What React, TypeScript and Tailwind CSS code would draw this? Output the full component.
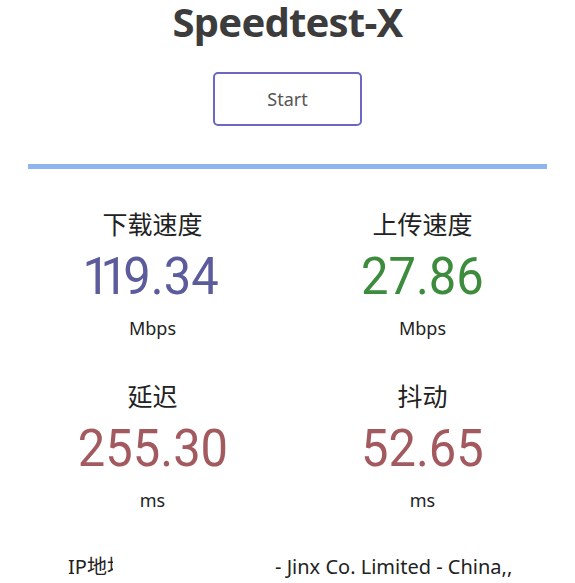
const stats = [
  { label: "下载速度", value: "119.34", unit: "Mbps", color: "text-[#5c5c9c]" },
  { label: "上传速度", value: "27.86", unit: "Mbps", color: "text-[#3d8b3d]" },
  { label: "延迟", value: "255.30", unit: "ms", color: "text-[#a25a5f]" },
  { label: "抖动", value: "52.65", unit: "ms", color: "text-[#a25a5f]" },
]

// the "1" in the original face is narrower than the other digits
const Digits = ({ value }: { value: string }) => (
  <>
    {value.split("").map((c, i) =>
      c === "1" ? (
        <span key={i} className="-mx-[5px]">1</span>
      ) : (
        <span key={i}>{c}</span>
      )
    )}
  </>
)

export default function App() {
  return (
    <div
      className="w-[575px] h-[583px] overflow-hidden bg-white flex flex-col items-center text-[#333]"
      style={{ fontFamily: '"Noto Sans", "Noto Sans CJK SC", sans-serif' }}
    >
      <h1 className="text-[40px] font-bold leading-[44px] text-[#3c3c3c] tracking-[-0.8px]">Speedtest-X</h1>

      <button className="mt-[28px] w-[149px] h-[54px] border-2 border-[#6b67c2] rounded-[5px] text-[18px] text-[#555]">
        Start
      </button>

      <div className="mt-[38px] w-[519px] h-[5px] bg-[#8fb5f1]" />

      <div className="w-[540px] grid grid-cols-2 mt-[38px] gap-y-[37px]">
        {stats.map((s) => (
          <div key={s.label} className="flex flex-col items-center">
            <div className="text-[25px] leading-[34px] text-[#222]">{s.label}</div>
            <div
              className={`mt-[6px] text-[52px] leading-[60px] scale-x-[0.94] ${s.color}`}
              style={{ fontFamily: "Roboto, sans-serif" }}
            >
              <Digits value={s.value} />
            </div>
            <div className="mt-[7px] text-[18px] leading-[28px] text-[#222]">{s.unit}</div>
          </div>
        ))}
      </div>

      <div className="w-full flex mt-[39px] text-[20px] leading-[28px] text-[#222]">
        <div className="ml-[68px] w-[45px] overflow-hidden whitespace-nowrap">IP地址</div>
        <div className="ml-[162px] whitespace-nowrap">- Jinx Co. Limited - China,,</div>
      </div>
    </div>
  )
}
